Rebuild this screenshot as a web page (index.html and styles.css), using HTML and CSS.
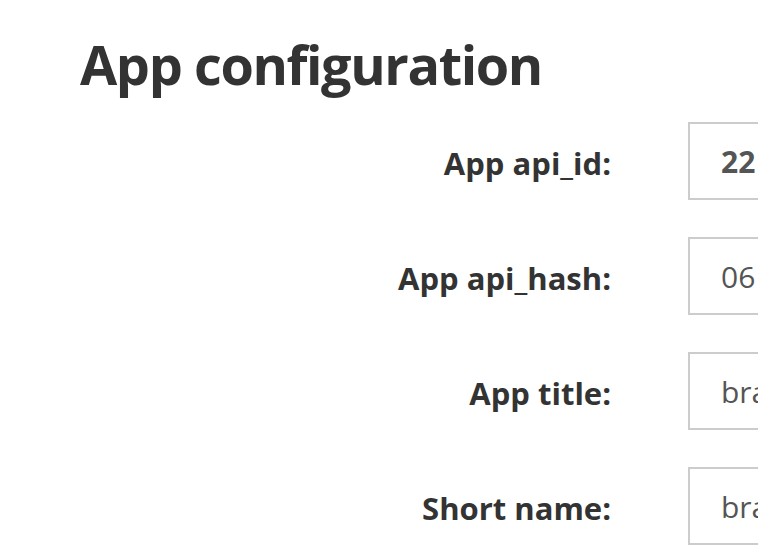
FILE: index.html
```html
<!DOCTYPE html>
<html>
<head>
<meta charset="utf-8">
<link rel="stylesheet" href="styles.css">
</head>
<body>
<div class="page">
  <h1 class="title">App configuration</h1>
  <form class="form">
    <div class="row">
      <label class="label">App api_id:</label>
      <div class="field"><strong>22</strong></div>
    </div>
    <div class="row">
      <label class="label">App api_hash:</label>
      <div class="field">06</div>
    </div>
    <div class="row">
      <label class="label">App title:</label>
      <div class="field">bra</div>
    </div>
    <div class="row">
      <label class="label">Short name:</label>
      <div class="field">bra</div>
    </div>
  </form>
</div>
</body>
</html>
```
FILE: styles.css
```css
html, body {
  margin: 0;
  padding: 0;
  background: #fff;
  overflow: hidden;
}
.page {
  width: 758px;
  height: 560px;
  overflow: hidden;
  font-family: "Open Sans", sans-serif;
  color: #333;
}
.title {
  margin: 0;
  padding: 37px 0 0 80px;
  font-size: 54px;
  line-height: 54px;
  font-weight: bold;
  letter-spacing: -1.4px;
}
.form {
  display: flex;
  flex-direction: column;
  gap: 37px;
  margin-top: 31px;
}
.row {
  display: flex;
  align-items: center;
  gap: 77px;
}
.label {
  width: 611px;
  flex: none;
  text-align: right;
  font-size: 31px;
  line-height: 40px;
  font-weight: bold;
  padding-top: 4px;
}
.field {
  flex: none;
  box-sizing: border-box;
  width: 400px;
  height: 78px;
  border: 2px solid #ccc;
  padding: 0 0 0 31px;
  display: flex;
  align-items: center;
  font-size: 30px;
  color: #555;
}
.field strong {
  font-weight: bold;
}
```
